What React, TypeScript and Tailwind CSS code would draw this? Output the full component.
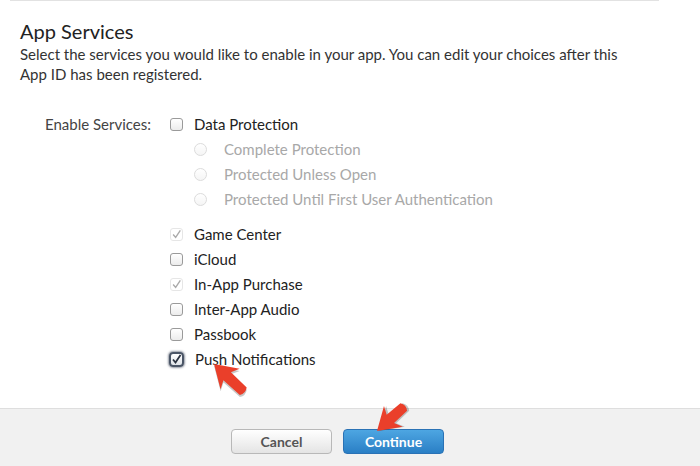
const font = { fontFamily: 'Lato, "Liberation Sans", sans-serif' };

type Svc = { name: string; state: 'off' | 'disabled-on' | 'focus-on' };

const services: Svc[] = [
  { name: 'Game Center', state: 'disabled-on' },
  { name: 'iCloud', state: 'off' },
  { name: 'In-App Purchase', state: 'disabled-on' },
  { name: 'Inter-App Audio', state: 'off' },
  { name: 'Passbook', state: 'off' },
  { name: 'Push Notifications', state: 'focus-on' },
];

const protections = ['Complete Protection', 'Protected Unless Open', 'Protected Until First User Authentication'];

function Box({ state }: { state: Svc['state'] }) {
  if (state === 'focus-on') {
    return (
      <span className="w-[15px] h-[15px] -ml-[1px] rounded-[4px] border-2 border-[#4a5566] bg-gradient-to-b from-white to-[#dfe3e8] shadow-[0_0_2px_1px_rgba(60,70,90,0.55)] flex items-center justify-center">
        <svg width="11" height="11" viewBox="0 0 11 11">
          <path d="M2 5.5 L4.5 8.5 L9.5 1" fill="none" stroke="#2b3340" strokeWidth="1.8" />
        </svg>
      </span>
    );
  }
  if (state === 'disabled-on') {
    return (
      <span className="w-[13px] h-[13px] rounded-[3px] border border-[#e6e6e6] flex items-center justify-center">
        <svg width="13" height="13" viewBox="0 0 13 13">
          <path d="M2.5 6.5 L5.5 10 L11 1.5" fill="none" stroke="#a9a9a9" strokeWidth="1.6" />
        </svg>
      </span>
    );
  }
  return (
    <span className="w-[13px] h-[13px] rounded-[3px] border border-[#9a9a9a] bg-gradient-to-b from-white to-[#ececec]" />
  );
}

function Arrow({ left, top, angle, len }: { left: number; top: number; angle: number; len: number }) {
  // tip sits at (left, top), the tail runs out along `angle`
  const d = `M0 0 L22 -14 L18 -5.5 L${len} -5 Q${len + 3.5} 0 ${len} 5 L18 5.5 L22 14 Z`;
  return (
    <svg className="absolute overflow-visible" style={{ left, top }} width="1" height="1">
      <g transform={`rotate(${angle})`}>
        <path d={d} fill="rgba(0,0,0,0.22)" transform="translate(1.5,1.5)" />
        <path d={d} fill="#ea3f2a" />
      </g>
    </svg>
  );
}

export default function App() {
  return (
    <div className="relative w-[700px] h-[466px] bg-white overflow-hidden text-[#333]" style={font}>
      <div className="h-[408px] flex flex-col">
        <div className="ml-[10px] w-[649px] h-px bg-[#e2e2e2]" />
        <div className="px-5 pt-[18px]">
          <h2 className="text-[20px] leading-[24px] text-[#222]">App Services</h2>
          <p className="mt-[1px] text-[15px] leading-[20px] text-[#333] max-w-[618px]">
            Select the services you would like to enable in your app. You can edit your choices after this App ID has
            been registered.
          </p>
        </div>

        <div className="flex mt-[28px] text-[15px]">
          <div className="w-[151px] text-right leading-[25px] text-[#444]">Enable Services:</div>
          <div className="ml-[19px] flex flex-col">
            <label className="flex items-center h-[25px] gap-[11px]">
              <Box state="off" />
              <span className="text-[#222]">Data Protection</span>
            </label>
            {protections.map((p) => (
              <label key={p} className="flex items-center h-[25px] pl-[24px] gap-[17px]">
                <span className="w-[13px] h-[13px] rounded-full border border-[#dcdcdc] bg-gradient-to-b from-white to-[#f5f5f5]" />
                <span className="text-[#a8a8a8]">{p}</span>
              </label>
            ))}
            <div className="h-[10px]" />
            {services.map((s) => (
              <label key={s.name} className="flex items-center h-[25px] gap-[11px]">
                <Box state={s.state} />
                <span className="text-[#222]">{s.name}</span>
              </label>
            ))}
          </div>
        </div>
      </div>

      <div className="h-[58px] border-t border-[#dedede] bg-[#f1f1f1] flex justify-center items-start pt-[20px] pr-[25px] gap-[11px]">
        <button className="w-[101px] h-[25px] rounded-[4px] border border-[#b8b8b8] bg-gradient-to-b from-white to-[#e4e4e4] text-[14px] font-bold text-[#555]">
          Cancel
        </button>
        <button className="w-[101px] h-[25px] rounded-[4px] border border-[#2a72b5] bg-gradient-to-b from-[#4da6e2] to-[#2a7fc5] text-[14px] font-bold text-white">
          Continue
        </button>
      </div>

      <Arrow left={214} top={364} angle={43} len={40} />
      <Arrow left={377} top={431} angle={-42} len={36} />
    </div>
  );
}
